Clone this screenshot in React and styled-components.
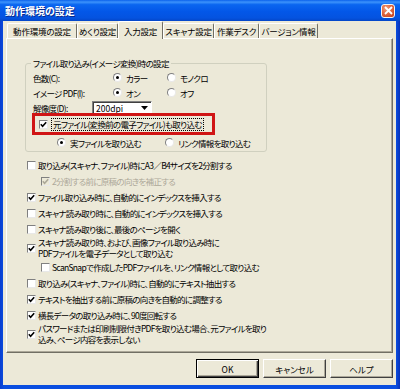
import React from "react";
import styled, { createGlobalStyle } from "styled-components";

const FONT = `"Noto Sans CJK JP", "Noto Sans", sans-serif`;

const Global = createGlobalStyle`
  html, body { margin: 0; padding: 0; width: 400px; height: 389px; overflow: hidden; background: #0840d6; }
  * { box-sizing: border-box; }
`;

const Frame = styled.div`
  width: 400px;
  height: 389px;
  display: flex;
  flex-direction: column;
  background: linear-gradient(90deg, #0a3ed0 0%, #0a4ee0 1%, #0a4ee0 99%, #0831b8 100%);
  font-family: ${FONT};
  font-size: 8.5px;
  letter-spacing: -0.7px;
  font-feature-settings: "palt";
  color: #000;
`;

const TitleBar = styled.div`
  height: 21px;
  flex: none;
  display: flex;
  align-items: center;
  justify-content: space-between;
  padding: 0 5px 0 5px;
  background: linear-gradient(180deg, #0b62ec 0%, #3c93fb 10%, #0a66f0 22%, #0357e8 55%, #0453e0 85%, #0446c8 100%);
`;

const Title = styled.span`
  color: #fff;
  font-weight: bold;
  font-size: 10px;
  letter-spacing: 0;
  text-shadow: 1px 1px 0 #0a2a8a;
`;

const CloseBtn = styled.div`
  width: 14px;
  height: 14px;
  border: 1px solid #f4f4f4;
  border-radius: 3px;
  background: radial-gradient(circle at 35% 30%, #f0a080 0%, #e2683f 45%, #c03c1a 100%);
  display: flex;
  align-items: center;
  justify-content: center;
`;

const Client = styled.div`
  flex: 1;
  margin: 0 4px 4px 3px;
  background: #ece9d8;
  display: flex;
  flex-direction: column;
  padding: 1px 3px 0 3px;
`;

const TabStrip = styled.div`
  height: 16px;
  display: flex;
  align-items: flex-end;
  padding-left: 1px;
  position: relative;
  z-index: 1;
`;

const Tab = styled.div`
  width: ${(p) => p.$w}px;
  height: ${(p) => (p.$active ? 18 : 15)}px;
  margin-bottom: ${(p) => (p.$active ? -1 : 0)}px;
  display: flex;
  align-items: center;
  justify-content: center;
  white-space: nowrap;
  letter-spacing: -0.2px;
  background: #ece9d8;
  border-top: 1px solid #fff;
  border-left: 1px solid #fff;
  border-right: 1px solid #716f64;
  border-radius: 2px 2px 0 0;
`;

const Panel = styled.div`
  height: 315px;
  flex: none;
  border: 1px solid;
  border-color: #fff #716f64 #716f64 #fff;
  box-shadow: inset -1px -1px 0 #aca899;
  padding: 24px 0 0 18px;
  display: flex;
  flex-direction: column;
`;

const Group = styled.div`
  position: relative;
  width: 242px;
  border: 1px solid #d0d0bf;
  border-radius: 3px;
  padding: 6px 0 1px 0;
  display: flex;
  flex-direction: column;
`;

const Legend = styled.span`
  position: absolute;
  top: -7px;
  left: 5px;
  padding: 0 2px;
  background: #ece9d8;
  line-height: 12px;
  white-space: nowrap;
`;

const FieldRow = styled.div`
  height: 15px;
  display: flex;
  align-items: center;
  padding-left: ${(p) => p.$indent || 7}px;
  white-space: nowrap;
`;

const FieldLabel = styled.span`
  width: ${(p) => p.$w}px;
  flex: none;
`;

const RadioItem = styled.span`
  display: flex;
  align-items: center;
  gap: 4px;
  width: ${(p) => (p.$w ? `${p.$w}px` : "auto")};
  flex: none;
`;

const RadioCircle = styled.span`
  width: 9px;
  height: 9px;
  border-radius: 50%;
  border: 1px solid;
  border-color: #808080 #e8e8e8 #e8e8e8 #808080;
  background: #fff;
  display: flex;
  align-items: center;
  justify-content: center;
  &::after {
    content: "";
    width: 3px;
    height: 3px;
    border-radius: 50%;
    background: ${(p) => (p.$on ? "#000" : "transparent")};
  }
`;

const Select = styled.div`
  width: 60px;
  height: 14px;
  border: 1px solid;
  border-color: #808080 #fff #fff #808080;
  box-shadow: inset 1px 1px 0 #404040;
  background: #fff;
  display: flex;
  align-items: center;
  justify-content: space-between;
  padding: 0 3px 0 3px;
  letter-spacing: 0;
`;

const Highlight = styled.div`
  margin: -2px 0 0 6px;
  width: 183px;
  height: 22px;
  border: 3px solid #d01515;
  display: flex;
  align-items: center;
  padding-left: 4px;
  gap: 3px;
  white-space: nowrap;
`;

const Focus = styled.span`
  border: 1px dotted #000;
  padding: 0 1px;
  line-height: 11px;
`;

const List = styled.div`
  margin-top: 5px;
  display: flex;
  flex-direction: column;
`;

const Item = styled.div`
  min-height: ${(p) => (p.$tall ? 22 : 16)}px;
  display: flex;
  align-items: center;
  gap: 2px;
  padding-left: ${(p) => (p.$sub ? 16 : 2)}px;
  color: ${(p) => (p.$disabled ? "#aca899" : "#000")};
  line-height: 11px;
  white-space: nowrap;
`;

const Box = styled.span`
  width: 9px;
  height: 9px;
  flex: none;
  border: 1px solid;
  border-color: #808080 #e8e8e8 #e8e8e8 #808080;
  background: ${(p) => (p.$disabled ? "#ece9d8" : "#fff")};
  display: flex;
  align-items: center;
  justify-content: center;
`;

const ButtonRow = styled.div`
  margin-top: 6px;
  display: flex;
  justify-content: flex-end;
  gap: 4px;
`;

const Button = styled.div`
  width: 63px;
  height: 19px;
  display: flex;
  align-items: center;
  justify-content: center;
  background: #ece9d8;
  letter-spacing: 0;
  border: 1px solid;
  border-color: ${(p) => (p.$default ? "#000" : "#fff #404040 #404040 #fff")};
  box-shadow: ${(p) =>
    p.$default
      ? "inset 1px 1px 0 #fff, inset -1px -1px 0 #404040, inset -2px -2px 0 #aca899"
      : "inset -1px -1px 0 #aca899"};
`;

const Check = ({ on, disabled }) => (
  <Box $disabled={disabled}>
    {on && (
      <svg width="7" height="7" viewBox="0 0 7 7">
        <path d="M0.8 3.2 L2.6 5.2 L6.2 1.2" fill="none" stroke={disabled ? "#aca899" : "#000"} strokeWidth="1.6" />
      </svg>
    )}
  </Box>
);

const Radio = ({ on, children, w }) => (
  <RadioItem $w={w}>
    <RadioCircle $on={on} />
    {children}
  </RadioItem>
);

const tabs = [
  ["動作環境の設定", 70],
  ["めくり設定", 41],
  ["入力設定", 45],
  ["スキャナ設定", 51],
  ["作業デスク", 45],
  ["バージョン情報", 59],
];

export default function App() {
  return (
    <>
      <Global />
      <Frame>
        <TitleBar>
          <Title>動作環境の設定</Title>
          <CloseBtn>
            <svg width="9" height="9" viewBox="0 0 9 9">
              <path d="M1 1 L8 8 M8 1 L1 8" stroke="#fff" strokeWidth="1.8" />
            </svg>
          </CloseBtn>
        </TitleBar>
        <Client>
          <TabStrip>
            {tabs.map(([t, w], i) => (
              <Tab key={t} $active={i === 2} $w={w}>
                {t}
              </Tab>
            ))}
          </TabStrip>
          <Panel>
            <Group>
              <Legend>ファイル取り込み(イメージ変換)時の設定</Legend>
              <FieldRow>
                <FieldLabel $w={80}>色数(C):</FieldLabel>
                <Radio on w={54}>カラー</Radio>
                <Radio>モノクロ</Radio>
              </FieldRow>
              <FieldRow>
                <FieldLabel $w={80}>イメージ PDF(I):</FieldLabel>
                <Radio on w={54}>オン</Radio>
                <Radio>オフ</Radio>
              </FieldRow>
              <FieldRow>
                <FieldLabel $w={59}>解像度(D):</FieldLabel>
                <Select>
                  <span>200dpi</span>
                  <svg width="7" height="4" viewBox="0 0 7 4">
                    <path d="M0 0 L7 0 L3.5 4 Z" fill="#000" />
                  </svg>
                </Select>
              </FieldRow>
              <Highlight>
                <Check on />
                <Focus>元ファイル(変換前の電子ファイル)も取り込む</Focus>
              </Highlight>
              <FieldRow $indent={31}>
                <Radio on w={108}>実ファイルを取り込む</Radio>
                <Radio>リンク情報を取り込む</Radio>
              </FieldRow>
            </Group>
            <List>
              <Item>
                <Check />
                取り込み(スキャナ、ファイル)時にA3／B4サイズを2分割する
              </Item>
              <Item $sub $disabled>
                <Check on disabled />
                2分割する前に原稿の向きを補正する
              </Item>
              <Item>
                <Check on />
                ファイル取り込み時に、自動的にインデックスを挿入する
              </Item>
              <Item>
                <Check />
                スキャナ読み取り時に、自動的にインデックスを挿入する
              </Item>
              <Item>
                <Check />
                スキャナ読み取り後に、最後のページを開く
              </Item>
              <Item $tall>
                <Check on />
                <span>
                  スキャナ読み取り時、および、画像ファイル取り込み時に
                  <br />
                  PDFファイルを電子データとして取り込む
                </span>
              </Item>
              <Item $sub>
                <Check />
                ScanSnapで作成したPDFファイルを、リンク情報として取り込む
              </Item>
              <Item>
                <Check />
                取り込み(スキャナ、ファイル)時に、自動的にテキスト抽出する
              </Item>
              <Item>
                <Check on />
                テキストを抽出する前に原稿の向きを自動的に調整する
              </Item>
              <Item>
                <Check on />
                横長データの取り込み時に、90度回転する
              </Item>
              <Item $tall>
                <Check on />
                <span>
                  パスワードまたは印刷制限付きPDFを取り込む場合、元ファイルを取り
                  <br />
                  込み、ページ内容を表示しない
                </span>
              </Item>
            </List>
          </Panel>
          <ButtonRow>
            <Button $default>OK</Button>
            <Button>キャンセル</Button>
            <Button>ヘルプ</Button>
          </ButtonRow>
        </Client>
      </Frame>
    </>
  );
}
